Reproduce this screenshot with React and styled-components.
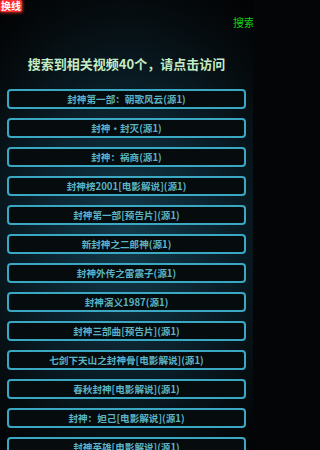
import React from "react";
import styled, { createGlobalStyle } from "styled-components";

const GlobalStyle = createGlobalStyle`
  html, body {
    margin: 0;
    padding: 0;
    height: 450px;
    overflow: hidden;
    background: #030506;
  }
  * {
    box-sizing: border-box;
  }
`;

const Page = styled.div`
  width: 253px;
  height: 450px;
  overflow: hidden;
  font-family: "Noto Sans CJK SC", "Noto Sans", sans-serif;
  background: radial-gradient(
    ellipse 80% 62% at 50% 52%,
    #14394a 0%,
    #0c2430 40%,
    #050b0e 82%,
    #020304 100%
  );
`;

const TopBar = styled.div`
  height: 12px;
  display: flex;
`;

const Badge = styled.span`
  display: inline-block;
  height: 12px;
  padding: 0 1px;
  font-size: 10px;
  line-height: 12px;
  font-weight: 700;
  color: #fff;
  background: #ff2b2b;
  border-radius: 2px;
  box-shadow: 0 0 3px 1px rgba(255, 60, 60, 0.7);
  white-space: nowrap;
`;

const SearchRow = styled.div`
  margin-top: 3px;
  height: 14px;
  padding-left: 233px;
  white-space: nowrap;
  font-size: 11px;
  line-height: 14px;
  color: #14d014;
`;

const Title = styled.h1`
  margin: 25px 0 0;
  height: 20px;
  text-align: center;
  font-size: 13px;
  line-height: 20px;
  font-weight: 700;
  color: #c4ecc4;
  white-space: nowrap;
`;

const List = styled.div`
  margin-top: 15px;
  padding: 0 7px;
  display: flex;
  flex-direction: column;
  gap: 9px;
`;

const Item = styled.button`
  height: 20px;
  width: 100%;
  padding: 0;
  border: 2px solid #3aa8c2;
  border-radius: 4px;
  background: #060b0d;
  color: #5ab4c6;
  font-family: inherit;
  font-size: 9.6px;
  font-weight: 700;
  line-height: 16px;
  text-align: center;
  white-space: nowrap;
  flex-shrink: 0;
`;

const videos = [
  "封神第一部：朝歌风云(源1)",
  "封神·封灭(源1)",
  "封神：祸商(源1)",
  "封神榜2001[电影解说](源1)",
  "封神第一部[预告片](源1)",
  "新封神之二郎神(源1)",
  "封神外传之雷震子(源1)",
  "封神演义1987(源1)",
  "封神三部曲[预告片](源1)",
  "七剑下天山之封神骨[电影解说](源1)",
  "春秋封神[电影解说](源1)",
  "封神：妲己[电影解说](源1)",
  "封神英雄[电影解说](源1)",
];

export default function App() {
  return (
    <Page>
      <GlobalStyle />
      <TopBar>
        <Badge>换线</Badge>
      </TopBar>
      <SearchRow>搜索</SearchRow>
      <Title>搜索到相关视频40个，请点击访问</Title>
      <List>
        {videos.map((name) => (
          <Item key={name}>{name}</Item>
        ))}
      </List>
    </Page>
  );
}
